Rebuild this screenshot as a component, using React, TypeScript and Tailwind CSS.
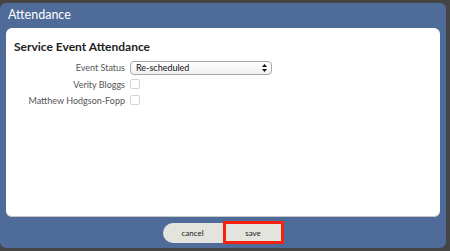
import React from "react";

function Row({ label, h, children }: { label: string; h: string; children: React.ReactNode }) {
  return (
    <div className={`flex items-center ${h}`}>
      <div className="w-[116px] pr-[5px] text-right text-[9px] text-[#555] whitespace-nowrap leading-none">{label}</div>
      {children}
    </div>
  );
}

function Check() {
  return <div className="w-[10px] h-[10px] rounded-[2px] border border-[#d4d4d4] bg-white" />;
}

export default function App() {
  return (
    <div className="w-[450px] h-[251px] bg-[#444] pt-[3px] pb-[3px] pr-[4px]" style={{ fontFamily: "Lato, 'Noto Sans', sans-serif" }}>
      <div className="w-[446px] h-[245px] rounded-[6px] bg-[#4f6b99] flex flex-col">
        {/* Title bar */}
        <div className="h-[25px] px-[8px] flex items-center text-white text-[12.5px] leading-none">Attendance</div>

        {/* Content panel */}
        <div className="mx-[6px] h-[189px] bg-white rounded-[6px] border-b border-[#c8c8c8] pt-[10px] px-[8px]">
          <h2 className="text-[12px] font-bold text-[#222] leading-[18px]">Service Event Attendance</h2>
          <div className="mt-[3px] flex flex-col">
            <Row label="Event Status" h="h-[17px]">
              <div className="w-[142px] h-[14px] rounded-[4px] border border-[#a8a8a8] bg-gradient-to-b from-white to-[#f0f0f0] flex items-center justify-between pl-[5px] pr-[4px]">
                <span className="text-[9px] text-[#111] leading-none">Re-scheduled</span>
                <svg width="5" height="8" viewBox="0 0 5 8">
                  <path d="M2.5 0 L5 3 L0 3 Z" fill="#111" />
                  <path d="M0 5 L5 5 L2.5 8 Z" fill="#111" />
                </svg>
              </div>
            </Row>
            <Row label="Verity Bloggs" h="h-[16px]">
              <Check />
            </Row>
            <Row label="Matthew Hodgson-Fopp" h="h-[16px]">
              <Check />
            </Row>
          </div>
        </div>

        {/* Footer */}
        <div className="flex-1 flex items-center justify-center">
          <button className="w-[60px] h-[20px] rounded-l-[10px] bg-[#e4e4df] text-[8px] text-[#222] leading-none">cancel</button>
          <button className="w-[61px] h-[23px] border-[3px] border-[#f5220f] bg-[#e4e4df] text-[8px] text-[#222] leading-none">save</button>
        </div>
      </div>
    </div>
  );
}
